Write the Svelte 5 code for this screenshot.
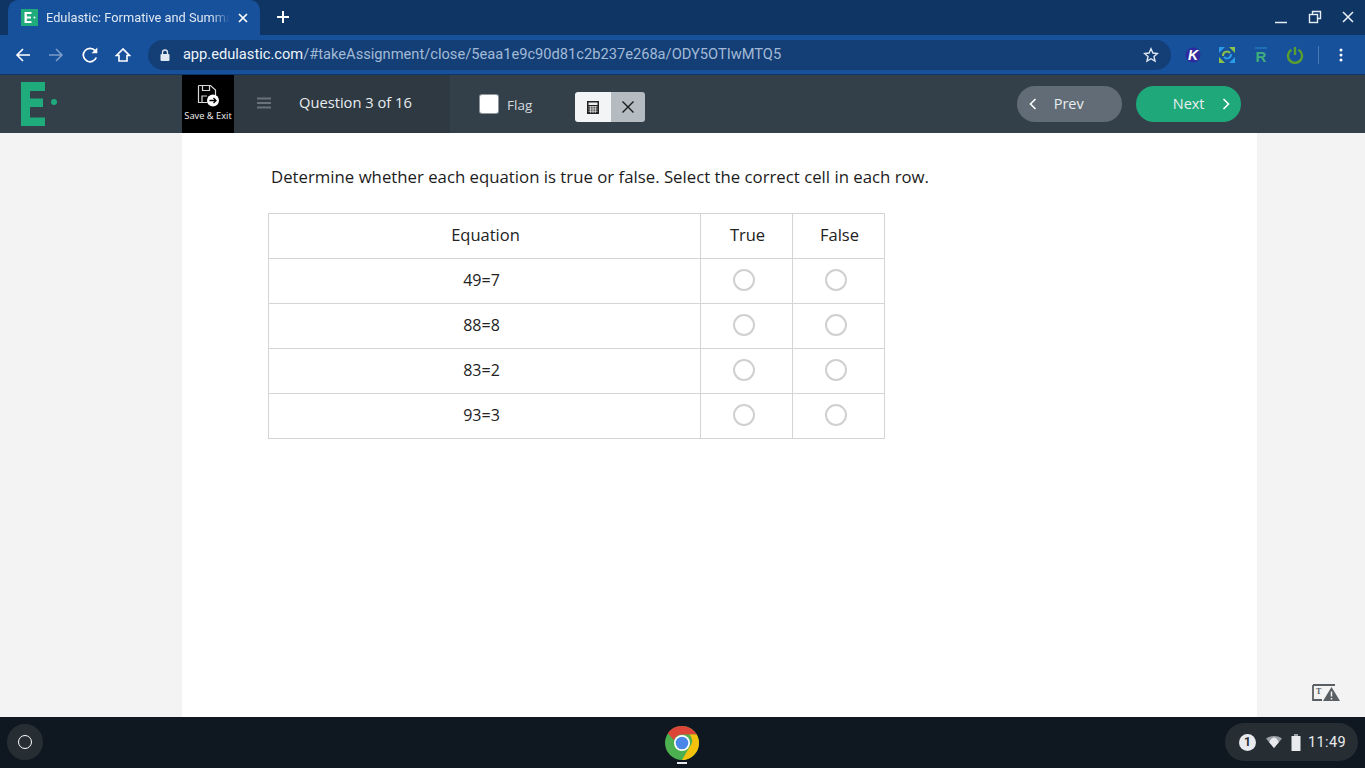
<script>
  const rows = ["49=7", "88=8", "83=2", "93=3"];
  const exts = ["k", "sync", "r", "power"];
</script>

<div class="screen">
  <div class="tabstrip">
    <div class="tab">
      <span class="favicon">
        <svg width="17" height="17" viewBox="0 0 17 17"><rect width="17" height="17" fill="#1fab7c"/><path d="M3.500 3h7v2H5.800v2.500h4.200v2H5.800V12h4.700v2h-7z" fill="#fff"/><circle cx="13.500" cy="8.500" r="1" fill="#fff"/></svg>
      </span>
      <span class="tab-title">Edulastic: Formative and Summa</span>
      <svg class="tab-close" width="12" height="12" viewBox="0 0 12 12"><path d="M2 2l8 8M10 2l-8 8" stroke="#fff" stroke-width="1.700"/></svg>
    </div>
    <svg class="newtab" width="14" height="14" viewBox="0 0 14 14"><path d="M7 1v12M1 7h12" stroke="#fff" stroke-width="2"/></svg>
    <div class="winbtns">
      <svg width="14" height="14" viewBox="0 0 14 14"><path d="M1 12.500h12" stroke="#e6edf5" stroke-width="1.500"/></svg>
      <svg width="14" height="14" viewBox="0 0 14 14"><path d="M4.500 4V1.500h8v7H10" fill="none" stroke="#e6edf5" stroke-width="1.400"/><rect x="1.500" y="4.500" width="8" height="8" fill="none" stroke="#e6edf5" stroke-width="1.400"/></svg>
      <svg width="14" height="14" viewBox="0 0 14 14"><path d="M2 2l10 10M12 2L2 12" stroke="#e6edf5" stroke-width="1.600"/></svg>
    </div>
  </div>

  <div class="toolbar">
    <div class="nav">
      <svg width="16" height="16" viewBox="0 0 16 16"><path d="M15 8H2M8 2L2 8l6 6" fill="none" stroke="#fff" stroke-width="1.600"/></svg>
      <svg width="16" height="16" viewBox="0 0 16 16"><path d="M1 8h13M8 2l6 6-6 6" fill="none" stroke="#7d9cc7" stroke-width="1.600"/></svg>
      <svg class="reload" width="16" height="16" viewBox="0 0 16 16"><path d="M14.300 10.500A6.700 6.700 0 1 1 13.200 3.800" fill="none" stroke="#fff" stroke-width="1.700"/><path d="M15.300 .5v5.800H9.500z" fill="#fff"/></svg>
      <svg width="16" height="16" viewBox="0 0 16 16"><path d="M8 2L1.500 8.500H4v5.500h8V8.500h2.500z" fill="none" stroke="#fff" stroke-width="1.600"/></svg>
    </div>
    <div class="omnibox">
      <svg class="lock" width="10" height="12" viewBox="0 0 10 12"><path d="M2.500 5V3.500a2.500 2.500 0 0 1 5 0V5" fill="none" stroke="#dfe7f1" stroke-width="1.300"/><rect x="0.500" y="5" width="9" height="7" rx="1" fill="#dfe7f1"/></svg>
      <span class="url"><span class="host">app.edulastic.com</span>/#takeAssignment/close/5eaa1e9c90d81c2b237e268a/ODY5OTIwMTQ5</span>
      <svg class="star" width="16" height="16" viewBox="0 0 16 16"><path d="M8 1.800l1.900 4.200 4.500.5-3.400 3 1 4.500L8 11.700 4 14l1-4.500-3.400-3 4.500-.5z" fill="none" stroke="#dfe7f1" stroke-width="1.400"/></svg>
    </div>
    <div class="exts">
      {#each exts as ext}
        <span class="ext">
          {#if ext === "k"}
            <svg width="18" height="18" viewBox="0 0 18 18"><circle cx="9" cy="9" r="7.500" fill="#2f2a9e"/><text x="9" y="14" text-anchor="middle" class="ext-k">K</text></svg>
          {:else if ext === "sync"}
            <svg width="18" height="18" viewBox="0 0 18 18"><path d="M1 1h6L1 7z" fill="#2a9be8"/><path d="M17 1v6l-6-6z" fill="#8bc34a"/><path d="M1 17v-6l6 6z" fill="#8bc34a"/><path d="M17 17h-6l6-6z" fill="#2a9be8"/><path d="M5 10a4 4 0 0 1 7-3" fill="none" stroke="#8bc34a" stroke-width="2"/><path d="M13 8a4 4 0 0 1-7 3" fill="none" stroke="#2a9be8" stroke-width="2"/></svg>
          {:else if ext === "r"}
            <svg width="18" height="18" viewBox="0 0 18 18"><path d="M3 1h12v2H3z" fill="#1f6fb5"/><text x="9" y="15.500" text-anchor="middle" class="ext-r">R</text></svg>
          {:else}
            <svg width="18" height="18" viewBox="0 0 18 18"><path d="M5.500 3.800a7 7 0 1 0 7 0" fill="none" stroke="#5a9e32" stroke-width="2.400"/><path d="M9 1v8" stroke="#5a9e32" stroke-width="2.400"/></svg>
          {/if}
        </span>
      {/each}
      <span class="sep"></span>
      <svg class="dots" width="4" height="14" viewBox="0 0 4 14"><circle cx="2" cy="2" r="1.500" fill="#fff"/><circle cx="2" cy="7" r="1.500" fill="#fff"/><circle cx="2" cy="12" r="1.500" fill="#fff"/></svg>
    </div>
  </div>

  <header class="appbar">
    <div class="logo">
      <svg width="38" height="46" viewBox="0 0 38 46"><path d="M0 0h24v9H9v7.500h13V25H9v10.500h15V44H0z" fill="#1fab7c"/><circle cx="33" cy="20" r="3" fill="#1fab7c"/></svg>
    </div>
    <div class="question-area">
      <button class="save">
        <svg width="24" height="24" viewBox="0 0 24 24">
          <path d="M2.500 2.500h12l5 4.500v6M2.500 2.500v17h9" fill="none" stroke="#d8d8d8" stroke-width="1.200"/>
          <path d="M6.500 2.500v5h7v-5M6 19v-6h5" fill="none" stroke="#d8d8d8" stroke-width="1.200"/>
          <circle cx="17" cy="17.500" r="6" fill="#fff"/>
          <path d="M13.500 17.500h6.500M17.500 15l2.500 2.500-2.500 2.500" fill="none" stroke="#000" stroke-width="1.300"/>
        </svg>
        <span>Save &amp; Exit</span>
      </button>
      <svg class="burger" width="14" height="12" viewBox="0 0 14 12"><path d="M0 1.500h14M0 6h14M0 10.500h14" stroke="#69727a" stroke-width="2"/></svg>
      <span class="progress">Question 3 of 16</span>
    </div>
    <label class="flag">
      <span class="box"></span>
      Flag
    </label>
    <div class="tools">
      <span class="calc">
        <svg width="12" height="13" viewBox="0 0 12 13"><path d="M0 0h12v13H0z" fill="#222"/><path d="M1.500 1.500h9v2.500h-9z" fill="#eee"/><path d="M1.500 5.800h9M1.500 8h9M1.500 10.200h9M3.700 5v7M6 5v7M8.300 5v7" stroke="#eee" stroke-width=".8"/></svg>
      </span>
      <span class="cross">
        <svg width="14" height="14" viewBox="0 0 14 14"><path d="M1.500 1.500l11 11M12.500 1.500l-11 11" stroke="#1a1a1a" stroke-width="1.400"/></svg>
      </span>
    </div>
    <div class="pager">
      <button class="pill prev">
        <svg width="8" height="12" viewBox="0 0 8 12"><path d="M6.500 1L1.500 6l5 5" fill="none" stroke="#fff" stroke-width="1.600"/></svg>
        <span>Prev</span>
      </button>
      <button class="pill next">
        <span>Next</span>
        <svg width="8" height="12" viewBox="0 0 8 12"><path d="M1.500 1l5 5-5 5" fill="none" stroke="#fff" stroke-width="1.600"/></svg>
      </button>
    </div>
  </header>

  <main class="content">
    <div class="sheet">
      <p class="prompt">Determine whether each equation is true or false. Select the correct cell in each row.</p>
      <table>
        <thead>
          <tr>
            <th class="eq">Equation</th>
            <th class="opt">True</th>
            <th class="opt">False</th>
          </tr>
        </thead>
        <tbody>
          {#each rows as row}
            <tr>
              <td class="eq"><span class="eq-text">{row}</span></td>
              <td class="opt"><span class="radio"></span></td>
              <td class="opt"><span class="radio"></span></td>
            </tr>
          {/each}
        </tbody>
      </table>
    </div>
    <svg class="report" width="28" height="18" viewBox="0 0 28 18">
      <path d="M1 1h22M1 1v15h9" fill="none" stroke="#5a5f63" stroke-width="1.800"/>
      <text x="4" y="10" class="report-t">T</text>
      <path d="M19.500 3L28 17H11z" fill="#5a5f63"/>
      <path d="M19.500 7.500v5M19.500 14v1.500" stroke="#f3f3f3" stroke-width="1.500"/>
    </svg>
  </main>

  <footer class="shelf">
    <span class="launcher"><span class="ring"></span></span>
    <div class="pinned">
      <svg width="36" height="36" viewBox="0 0 36 36">
        <circle cx="18" cy="18" r="17" fill="#4caf50"/>
        <path d="M18 1a17 17 0 0 1 14.700 8.500H18a8.500 8.500 0 0 0-8 5.700L3.800 8.200A17 17 0 0 1 18 1z" fill="#db4437"/>
        <path d="M32.700 9.500A17 17 0 0 1 18 35l7.400-12.800A8.500 8.500 0 0 0 25.400 9.500z" fill="#f4c20d"/>
        <circle cx="18" cy="18" r="8" fill="#fff"/>
        <circle cx="18" cy="18" r="6.300" fill="#4a86e8"/>
      </svg>
      <span class="running"></span>
    </div>
    <div class="tray">
      <span class="badge">1</span>
      <svg width="16" height="12" viewBox="0 0 16 12"><path d="M0 2.500C4.500-.8 11.500-.8 16 2.500L8 12z" fill="#9aa0a6"/><path d="M3.200 6.300C6-.0 10-.0 12.800 6.300L8 12z" fill="#e8eaed"/></svg>
      <svg class="battery" width="10" height="17" viewBox="0 0 10 17"><path d="M3 0h4v2H3z" fill="#9aa0a6"/><path d="M.5 2h9v15h-9z" fill="#e8eaed"/></svg>
      <span class="clock">11:49</span>
    </div>
  </footer>
</div>

<style>
  :global(body) {
    margin: 0;
    overflow: hidden;
  }

  .screen {
    width: 1365px;
    height: 768px;
    display: flex;
    flex-direction: column;
    font-family: "Open Sans", sans-serif;
    background: #f3f3f3;
  }

  .tabstrip {
    height: 35px;
    flex: none;
    display: flex;
    align-items: flex-start;
    background: #0e3563;
  }

  .tab {
    width: 252px;
    height: 35px;
    margin-left: 8px;
    box-sizing: border-box;
    padding: 0 11px 0 13px;
    display: flex;
    align-items: center;
    background: #17509b;
    border-radius: 10px 10px 0 0;
  }

  .favicon {
    display: flex;
    margin-right: 8px;
  }

  .tab-title {
    width: 184px;
    flex: none;
    font-family: Roboto, sans-serif;
    font-size: 12.800px;
    color: #dfe8f3;
    white-space: nowrap;
    -webkit-mask-image: linear-gradient(to right, #000 165px, transparent 184px);
    mask-image: linear-gradient(to right, #000 165px, transparent 184px);
  }

  .tab-close {
    margin-left: 7px;
  }

  .newtab {
    margin: 10px 0 0 16px;
  }

  .winbtns {
    margin-left: auto;
    margin-top: 10px;
    margin-right: 10px;
    display: flex;
    gap: 19.500px;
  }

  .toolbar {
    height: 40px;
    flex: none;
    display: flex;
    align-items: center;
    background: #17509b;
    border-bottom: 1px solid #0f3766;
    box-sizing: border-box;
  }

  .nav {
    display: flex;
    align-items: center;
    gap: 17.300px;
    margin-left: 15px;
  }

  .omnibox {
    width: 1023px;
    height: 30px;
    margin-left: 17px;
    box-sizing: border-box;
    padding: 0 12px;
    display: flex;
    align-items: center;
    background: #133f76;
    border-radius: 15px;
  }

  .lock {
    flex: none;
  }

  .url {
    margin-left: 13px;
    margin-top: -1px;
    font-family: Roboto, sans-serif;
    font-size: 14.670px;
    color: #a3bad6;
    white-space: nowrap;
  }

  .host {
    color: #eef3f9;
  }

  .star {
    margin-left: auto;
  }

  .exts {
    display: flex;
    align-items: center;
    margin-left: 13px;
    gap: 16px;
  }

  .ext {
    display: flex;
    width: 18px;
    height: 18px;
  }

  .ext-k {
    font: italic 700 14px "Liberation Sans", sans-serif;
    fill: #fff;
  }

  .ext-r {
    font: 700 15px "Liberation Sans", sans-serif;
    fill: #3fae7a;
  }

  .sep {
    width: 1px;
    height: 18px;
    margin-left: -2px;
    background: #4a78b3;
  }

  .dots {
    margin-left: 4px;
  }

  .appbar {
    height: 58px;
    flex: none;
    display: flex;
    align-items: stretch;
    background: #334049;
  }

  .logo {
    width: 182px;
    box-sizing: border-box;
    padding: 7px 0 0 21px;
  }

  .question-area {
    width: 268px;
    display: flex;
    align-items: center;
    background: #2e3942;
  }

  .save {
    width: 52px;
    height: 58px;
    padding: 8px 0 0;
    border: 0;
    display: flex;
    flex-direction: column;
    align-items: center;
    background: #000;
    color: #f2f2f2;
    font-family: "Open Sans", sans-serif;
    font-size: 9.300px;
    white-space: nowrap;
  }

  .save span {
    margin-top: 2px;
  }

  .burger {
    margin-left: 23px;
    margin-top: -3px;
  }

  .progress {
    margin-left: 28px;
    margin-top: -4px;
    font-size: 14.700px;
    color: #e8ecef;
  }

  .flag {
    display: flex;
    align-items: center;
    margin-left: 30px;
    padding-top: 2px;
    font-size: 13.500px;
    color: #d5dade;
  }

  .box {
    width: 18px;
    height: 18px;
    margin-right: 9px;
    margin-top: -2px;
    background: #fff;
    border-radius: 2px;
    box-shadow: 0 0 0 1px #8f979d;
  }

  .tools {
    display: flex;
    height: 30px;
    margin: 17px 0 0 42.500px;
    border-radius: 3px;
    overflow: hidden;
  }

  .calc, .cross {
    display: flex;
    align-items: center;
    justify-content: center;
  }

  .calc {
    width: 36px;
    background: #f3f4f5;
  }

  .cross {
    width: 34px;
    background: #b5bcc1;
  }

  .pager {
    display: flex;
    gap: 14px;
    margin: 11px 0 0 372px;
  }

  .pill {
    width: 105px;
    height: 36px;
    border: 0;
    border-radius: 18px;
    display: flex;
    align-items: center;
    color: #e9eef0;
    font-family: "Open Sans", sans-serif;
    font-size: 14.500px;
  }

  .pill span {
    margin-top: -2px;
  }

  .prev {
    padding: 0 0 0 12px;
    background: #616c76;
  }

  .prev span {
    margin-left: 17px;
  }

  .next {
    padding: 0 0 0 37px;
    background: #1fa97a;
  }

  .next svg {
    margin-left: 17px;
  }

  .content {
    flex: 1;
    position: relative;
    display: flex;
    justify-content: flex-start;
  }

  .sheet {
    width: 1075px;
    margin-left: 182px;
    box-sizing: border-box;
    padding: 33px 0 0 86px;
    background: #fff;
  }

  .prompt {
    margin: 0 0 25px 3px;
    font-size: 16.780px;
    line-height: 22px;
    color: #1c1c1c;
    white-space: nowrap;
  }

  table {
    width: 617px;
    border-collapse: collapse;
    table-layout: fixed;
    color: #222;
    font-size: 16px;
  }

  th, td {
    height: 45px;
    box-sizing: border-box;
    padding: 0 0 2px;
    border: 1px solid #d4d4d4;
    text-align: center;
    font-weight: 400;
  }

  th {
    padding: 0 0 4px 2px;
    font-size: 16.500px;
  }

  .opt {
    width: 92px;
  }

  td .eq-text {
    position: relative;
    left: -3px;
  }

  .radio {
    display: block;
    width: 18px;
    height: 18px;
    margin-left: 32px;
    border: 2px solid #d0d0d0;
    border-radius: 50%;
  }

  .report {
    position: absolute;
    right: 25px;
    bottom: 15px;
  }

  .report-t {
    font: 700 8px "Liberation Serif", serif;
    fill: #5a5f63;
  }

  .shelf {
    height: 51px;
    flex: none;
    display: flex;
    align-items: center;
    position: relative;
    background: #0f1820;
  }

  .launcher {
    width: 36px;
    height: 36px;
    margin-left: 7px;
    margin-bottom: 1px;
    display: flex;
    align-items: center;
    justify-content: center;
    background: #262e34;
    border-radius: 50%;
  }

  .ring {
    width: 12px;
    height: 12px;
    border: 1.500px solid #fff;
    border-radius: 50%;
  }

  .pinned {
    position: absolute;
    left: 664px;
    top: 8px;
    display: flex;
    flex-direction: column;
    align-items: center;
  }

  .running {
    width: 10px;
    height: 2px;
    margin-top: 1px;
    background: #e8eaed;
  }

  .tray {
    margin-left: auto;
    margin-right: 7px;
    margin-bottom: 1px;
    height: 38px;
    width: 133px;
    box-sizing: border-box;
    padding-left: 14px;
    display: flex;
    align-items: center;
    background: #262e34;
    border-radius: 19px;
  }

  .badge {
    width: 17px;
    height: 17px;
    border-radius: 50%;
    background: #e8eaed;
    color: #262e34;
    font: 700 12px/17px Roboto, sans-serif;
    text-align: center;
    margin-right: 10px;
  }

  .battery {
    margin-left: 9px;
  }

  .clock {
    margin-left: 7px;
    font-family: Roboto, sans-serif;
    font-size: 14.500px;
    letter-spacing: 0.4px;
    color: #e8eaed;
  }
</style>
